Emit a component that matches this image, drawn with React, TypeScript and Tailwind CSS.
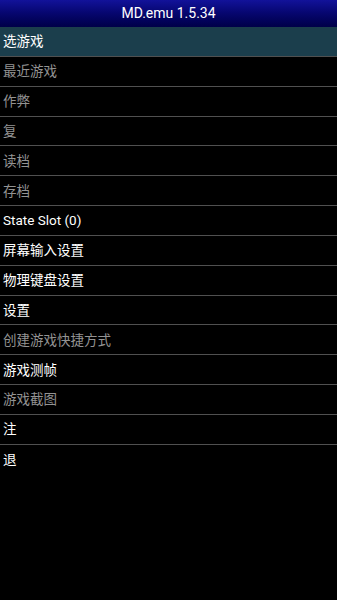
const items: { label: string; enabled: boolean; selected?: boolean }[] = [
  { label: "选游戏", enabled: true, selected: true },
  { label: "最近游戏", enabled: false },
  { label: "作弊", enabled: false },
  { label: "复", enabled: false },
  { label: "读档", enabled: false },
  { label: "存档", enabled: false },
  { label: "State Slot (0)", enabled: true },
  { label: "屏幕输入设置", enabled: true },
  { label: "物理键盘设置", enabled: true },
  { label: "设置", enabled: true },
  { label: "创建游戏快捷方式", enabled: false },
  { label: "游戏测帧", enabled: true },
  { label: "游戏截图", enabled: false },
  { label: "注", enabled: true },
  { label: "退", enabled: true },
];

export default function App() {
  return (
    <div
      className="h-[600px] w-[337px] overflow-hidden bg-black"
      style={{ fontFamily: 'Roboto, "Noto Sans CJK SC", sans-serif' }}
    >
      <div className="flex h-[27px] items-center justify-center bg-gradient-to-b from-[#12129a] via-[#06066e] to-[#000048] text-[14px] text-white">
        MD.emu 1.5.34
      </div>
      <div className="flex flex-col">
        {items.map((item, i) => (
          <div
            key={item.label}
            className={`flex h-[29.85px] items-center px-[3px] text-[13.5px] ${
              i < items.length - 1 ? "border-b border-[#505050]" : ""
            } ${item.selected ? "bg-[#1b3e4c]" : ""} ${
              item.enabled ? "text-white" : "text-[#939393]"
            }`}
          >
            {item.label}
          </div>
        ))}
      </div>
    </div>
  );
}
